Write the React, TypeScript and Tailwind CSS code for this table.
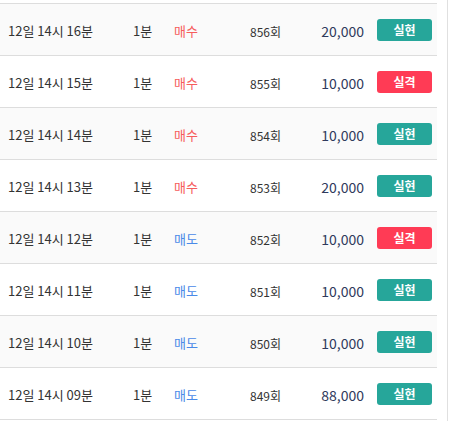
import React from "react";

const rows = [
    {time: "12일 14시 16분", side: "매수", round: "856회", amount: "20,000", ok: true},
    {time: "12일 14시 15분", side: "매수", round: "855회", amount: "10,000", ok: false},
    {time: "12일 14시 14분", side: "매수", round: "854회", amount: "10,000", ok: true},
    {time: "12일 14시 13분", side: "매수", round: "853회", amount: "20,000", ok: true},
    {time: "12일 14시 12분", side: "매도", round: "852회", amount: "10,000", ok: false},
    {time: "12일 14시 11분", side: "매도", round: "851회", amount: "10,000", ok: true},
    {time: "12일 14시 10분", side: "매도", round: "850회", amount: "10,000", ok: true},
    {time: "12일 14시 09분", side: "매도", round: "849회", amount: "88,000", ok: true},
];

export default function App() {
    return (
        <div
            className="flex h-[421px] w-[451px] bg-white"
            style={{fontFamily: '"Noto Sans CJK KR", "Noto Sans", sans-serif'}}
        >
            <div className="w-[437px] pt-[3px]">
                <ul className="border-t border-[#dddddd]">
                    {rows.map((row, i) => (
                        <li
                            key={row.round}
                            className={`flex h-[52px] items-center border-b border-[#dddddd] pt-[3px] ${i % 2 === 0 ? "bg-[#fafafa]" : "bg-white"}`}
                        >
                            <span className="w-[133px] pl-[8px] text-[13px] text-[#333333]">{row.time}</span>
                            <span className="w-[41px] text-[13px] text-[#333333]">1분</span>
                            <span className={`w-[76px] text-[13px] ${row.side === "매수" ? "text-[#f65c5c]" : "text-[#4a8ae8]"}`}>
                                {row.side}
                            </span>
                            <span className="w-[60px] pt-[2px] text-[12px] text-[#333333]">{row.round}</span>
                            <span className="w-[54px] text-right text-[14px] text-[#2f3a5c]">{row.amount}</span>
                            <span
                                className={`ml-[13px] -mt-[3px] flex h-[22px] w-[55px] items-center justify-center rounded-[3px] text-[12px] font-bold text-white ${row.ok ? "bg-[#26a69a]" : "bg-[#ff3b55]"}`}
                            >
                                {row.ok ? "실현" : "실격"}
                            </span>
                        </li>
                    ))}
                </ul>
            </div>
            <div className="ml-[10px] w-px bg-[#e0e0e0]"/>
        </div>
    )
}
